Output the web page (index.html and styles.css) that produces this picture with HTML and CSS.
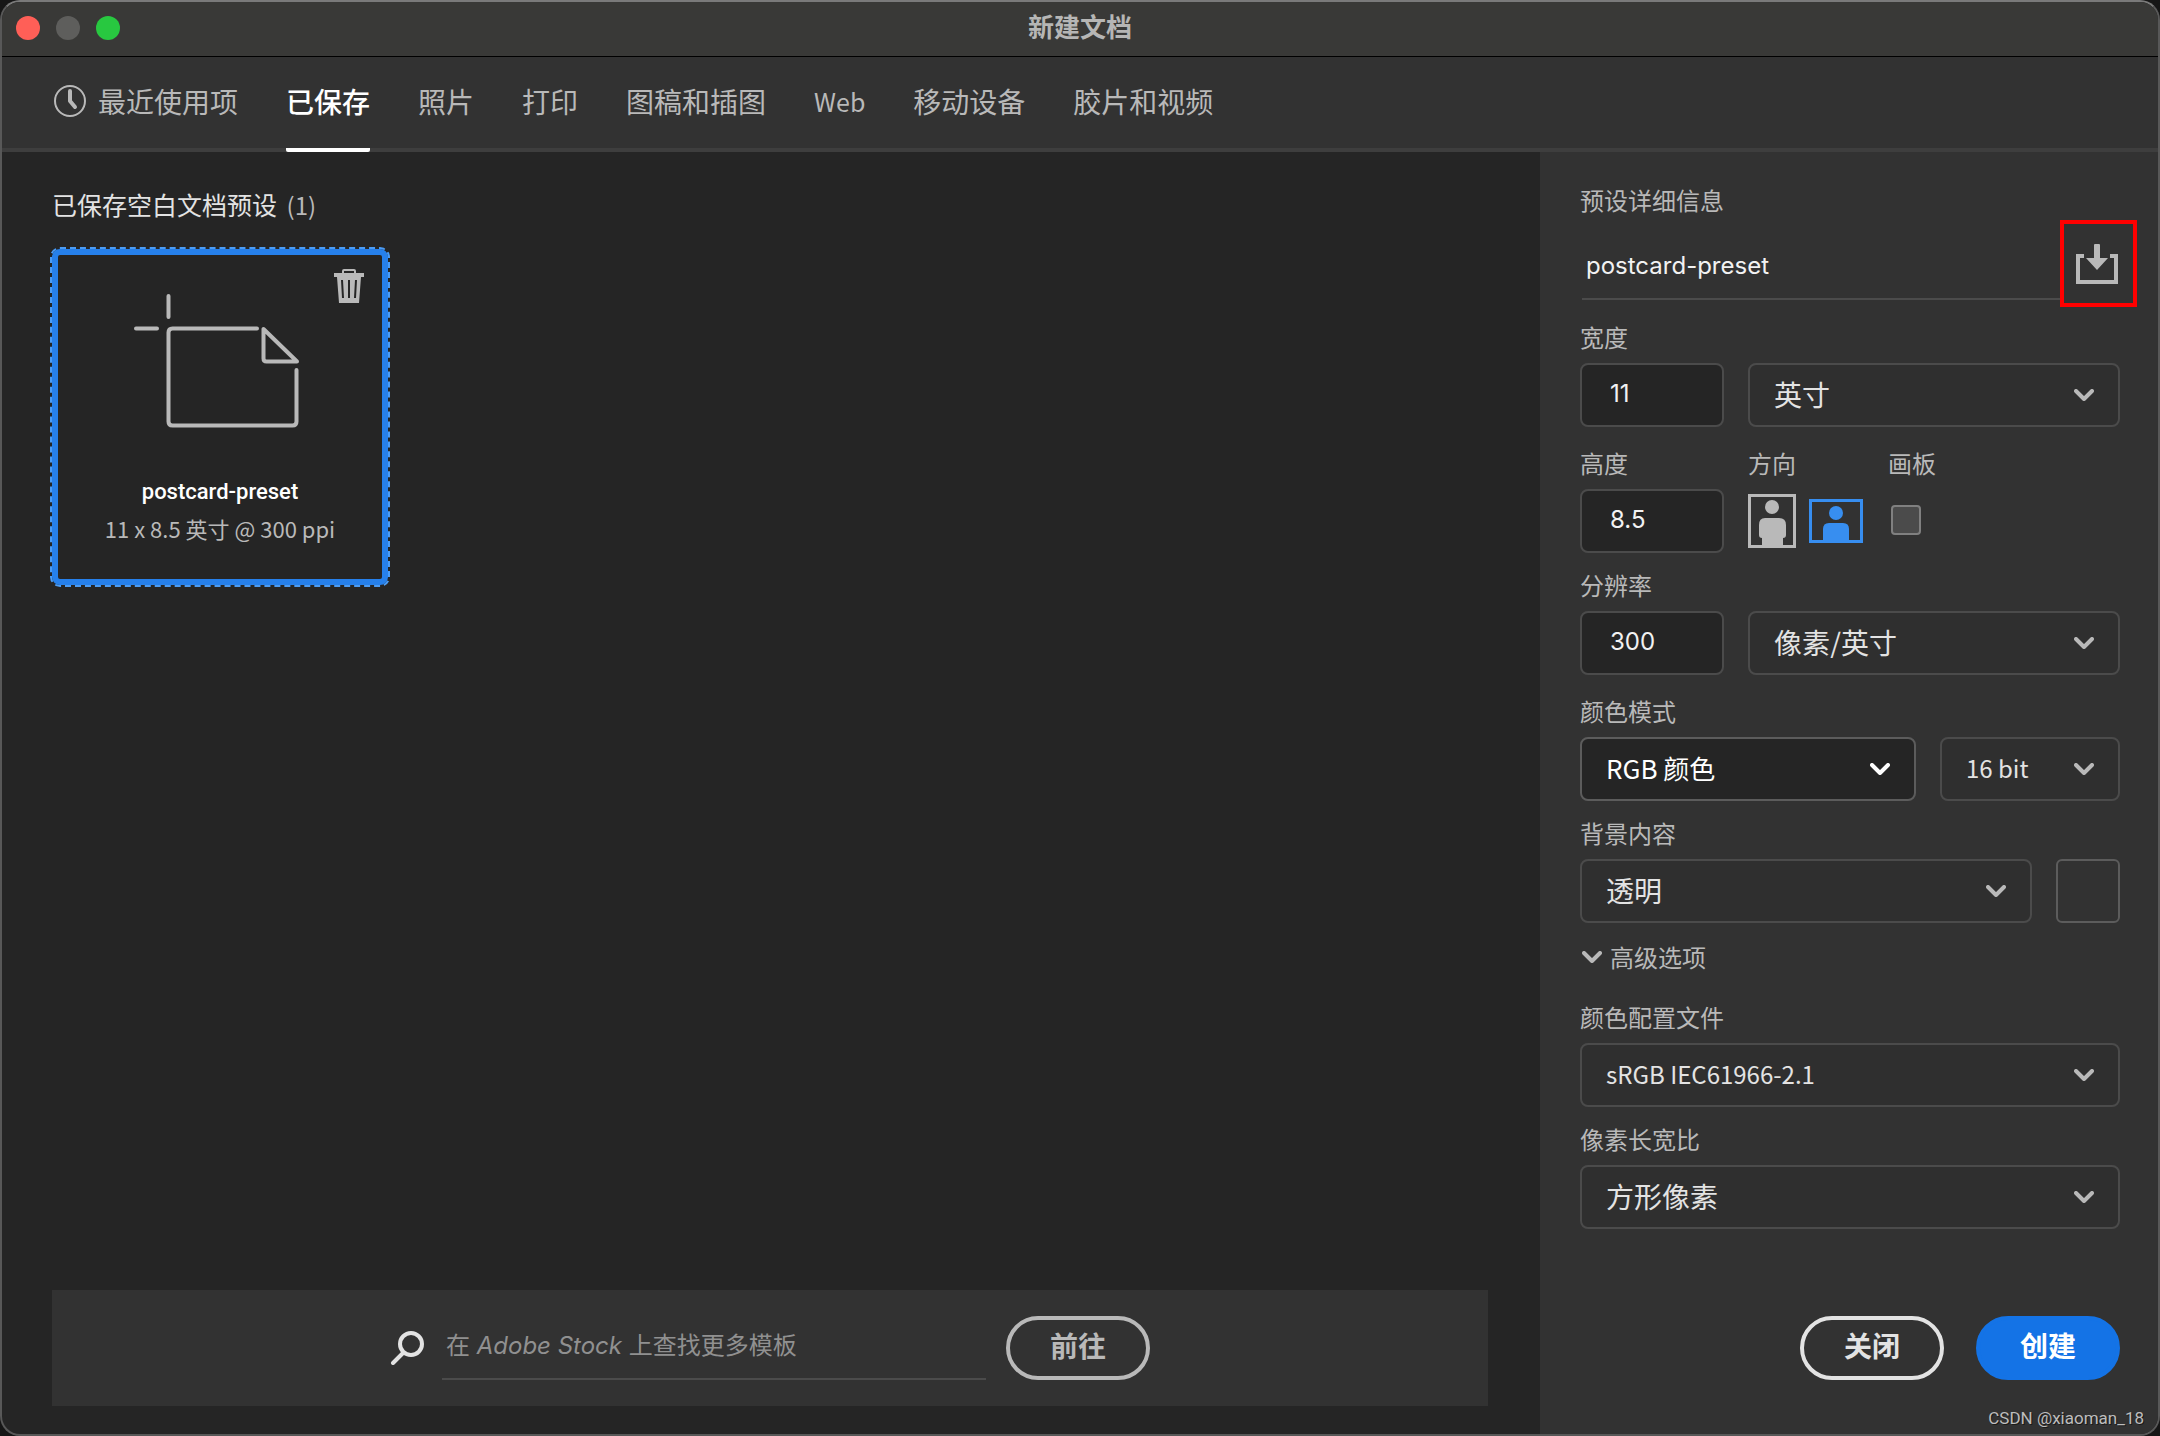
FILE: index.html
```html
<!DOCTYPE html>
<html lang="zh-CN">
<head>
<meta charset="utf-8">
<meta name="viewport" content="width=device-width, initial-scale=1">
<title>新建文档</title>
<link rel="stylesheet" href="styles.css">
</head>
<body>
<svg class="sprite" aria-hidden="true">
  <symbol id="chevron" viewBox="0 0 20 12"><path d="M2 2l8 8 8-8" fill="none" stroke="currentColor" stroke-width="4" stroke-linecap="round" stroke-linejoin="round"/></symbol>
</svg>
<div class="window">
  <header class="titlebar">
    <div class="lights">
      <button class="light light-close" type="button" aria-label="关闭窗口"></button>
      <button class="light light-min" type="button" aria-label="最小化" disabled></button>
      <button class="light light-zoom" type="button" aria-label="缩放"></button>
    </div>
    <h1 class="title">新建文档</h1>
  </header>

  <nav class="tabs">
    <a class="tab tab-recent" href="#recent">
      <svg class="clock" viewBox="0 0 32 32" aria-hidden="true"><circle cx="16" cy="16" r="15" fill="none" stroke="currentColor" stroke-width="2"/><path d="M16 6v10l5 6" fill="none" stroke="currentColor" stroke-width="4" stroke-linecap="round" stroke-linejoin="round"/></svg>
      <span>最近使用项</span>
    </a>
    <a class="tab tab-active" href="#saved" aria-current="page">已保存</a>
    <a class="tab" href="#photo">照片</a>
    <a class="tab" href="#print">打印</a>
    <a class="tab" href="#art">图稿和插图</a>
    <a class="tab tab-latin" href="#web">Web</a>
    <a class="tab" href="#mobile">移动设备</a>
    <a class="tab" href="#film">胶片和视频</a>
  </nav>

  <div class="content">
    <main class="presets">
      <h2 class="presets-title">已保存空白文档预设 <span class="count">(1)</span></h2>
      <article class="card" tabindex="0">
        <button class="trash" type="button" aria-label="删除预设">
          <svg viewBox="0 0 30 34" aria-hidden="true"><path d="M9 4V2q0-1 1-1h10q1 0 1 1v2" fill="none" stroke="currentColor" stroke-width="2"/><path fill="currentColor" fill-rule="evenodd" d="M0 4h30v4h-3l-2 26H5L3 8H0zM7 11l1 18h2L9 11zM14 11v18h2V11zM21 11l-1 18h2l1-18z"/></svg>
        </button>
        <svg class="doc" viewBox="0 0 176 138" aria-hidden="true"><path d="M36.500 4v21M4 36.500h21M125 36.500H40.500q-4 0-4 4v89q0 4 4 4h120q4 0 4-4V78M131.500 37v29.500q0 3 3 3H165z" fill="none" stroke="currentColor" stroke-width="4" stroke-linecap="round" stroke-linejoin="round"/></svg>
        <h3 class="card-name">postcard-preset</h3>
        <p class="card-info">11 x 8.5 英寸 @ 300 ppi</p>
      </article>

      <form class="stock">
        <svg class="search-icon" viewBox="0 0 34 34" aria-hidden="true"><circle cx="21" cy="13" r="11" fill="none" stroke="currentColor" stroke-width="4"/><path d="M13 22L3 32" stroke="currentColor" stroke-width="4" stroke-linecap="round"/></svg>
        <input class="stock-input" type="search" aria-label="查找模板" placeholder="在 Adobe Stock 上查找更多模板">
        <button class="pill pill-quiet" type="submit">前往</button>
      </form>
    </main>

    <form class="details">
      <label class="label" for="name">预设详细信息</label>
      <div class="name-row">
        <input class="name-input" id="name" type="text" value="postcard-preset">
        <button class="save" type="button" aria-label="保存预设">
          <svg viewBox="0 0 42 40" aria-hidden="true"><path d="M8 12H2v26h38V12h-6" fill="none" stroke="currentColor" stroke-width="4"/><path d="M18 1q0-1 1-1h4q1 0 1 1v13h8L21 26 10 14h8z" fill="currentColor"/></svg>
        </button>
      </div>

      <div class="field">
        <label class="label" for="width">宽度</label>
        <div class="row">
          <input class="number" id="width" type="text" value="11">
          <div class="select grow"><select aria-label="单位"><option>英寸</option></select><svg class="chevron"><use href="#chevron"/></svg></div>
        </div>
      </div>

      <div class="field-set">
        <div class="field">
          <label class="label" for="height">高度</label>
          <input class="number" id="height" type="text" value="8.5">
        </div>
        <div class="field field-orient">
          <span class="label" id="orient">方向</span>
          <div class="orient" role="radiogroup" aria-labelledby="orient">
            <div class="choice">
              <input type="radio" name="orient" aria-label="纵向">
              <svg class="portrait" viewBox="0 0 48 54" aria-hidden="true"><rect x="1.500" y="1.500" width="45" height="51" fill="none" stroke="currentColor" stroke-width="3"/><circle cx="24" cy="13" r="7" fill="currentColor"/><path d="M17 24h14q7 0 7 7v10q0 3-3 3v8H14v-8q-3 0-3-3V31q0-7 6-7z" fill="currentColor"/></svg>
            </div>
            <div class="choice">
              <input type="radio" name="orient" aria-label="横向" checked>
              <svg class="landscape" viewBox="0 0 54 44" aria-hidden="true"><rect x="1.500" y="1.500" width="51" height="41" fill="none" stroke="currentColor" stroke-width="3"/><circle cx="27" cy="14" r="7" fill="currentColor"/><path d="M20 24h14q6 0 6 6v13H14V30q0-6 6-6z" fill="currentColor"/></svg>
            </div>
          </div>
        </div>
        <div class="field">
          <label class="label" for="artboard">画板</label>
          <div class="check-row"><input class="check" id="artboard" type="checkbox"></div>
        </div>
      </div>

      <div class="field tight">
        <label class="label" for="resolution">分辨率</label>
        <div class="row">
          <input class="number" id="resolution" type="text" value="300">
          <div class="select grow"><select aria-label="分辨率单位"><option>像素/英寸</option></select><svg class="chevron"><use href="#chevron"/></svg></div>
        </div>
      </div>

      <div class="field">
        <label class="label" for="mode">颜色模式</label>
        <div class="row">
          <div class="select grow focused"><select id="mode"><option>RGB 颜色</option></select><svg class="chevron"><use href="#chevron"/></svg></div>
          <div class="select latin depth"><select aria-label="位深度"><option>16 bit</option></select><svg class="chevron"><use href="#chevron"/></svg></div>
        </div>
      </div>

      <div class="field tight">
        <label class="label" for="background">背景内容</label>
        <div class="row">
          <div class="select grow"><select id="background"><option>透明</option></select><svg class="chevron"><use href="#chevron"/></svg></div>
          <button class="swatch" type="button" aria-label="背景颜色"></button>
        </div>
      </div>

      <button class="advanced" type="button" aria-expanded="true"><svg><use href="#chevron"/></svg>高级选项</button>

      <div class="field profile">
        <label class="label" for="profile">颜色配置文件</label>
        <div class="select latin"><select id="profile"><option>sRGB IEC61966-2.1</option></select><svg class="chevron"><use href="#chevron"/></svg></div>
      </div>

      <div class="field tight">
        <label class="label" for="aspect">像素长宽比</label>
        <div class="select"><select id="aspect"><option>方形像素</option></select><svg class="chevron"><use href="#chevron"/></svg></div>
      </div>

      <div class="actions">
        <button class="pill" type="button">关闭</button>
        <button class="pill pill-primary" type="submit">创建</button>
      </div>
    </form>
  </div>
  <span class="watermark">CSDN @xiaoman_18</span>
</div>
</body>
</html>
```
FILE: styles.css
```css
* { box-sizing: border-box; }

body {
  margin: 0;
  background: #161616;
  color: #e3e3e3;
  font-family: "Noto Sans CJK SC", sans-serif;
  font-size: 24px;
  line-height: 32px;
}

button, input, select {
  margin: 0;
  padding: 0;
  border: 0;
  background: none;
  color: inherit;
  font: inherit;
  outline: 0;
}

h1, h2, h3, p { margin: 0; font-weight: 400; }
svg { display: block; }
.sprite { display: none; }

.window {
  position: relative;
  display: flex;
  flex-direction: column;
  min-height: 100vh;
  overflow: hidden;
  border: 2px solid #585858;
  border-top-color: #7a7a7a;
  border-radius: 20px;
  background: #252525;
}

/* Title bar */
.titlebar {
  display: grid;
  grid-template-columns: 1fr auto 1fr;
  align-items: center;
  height: 55px;
  padding: 0 14px 2px;
  border-bottom: 1px solid #000;
  background: #393937;
}
.lights { display: flex; gap: 16px; }
.light { width: 24px; height: 24px; border-radius: 50%; }
.light-close { background: #ff5f57; }
.light-min { background: #5e5e5c; }
.light-zoom { background: #28c840; }
.title { padding-bottom: 4px; color: #b6b6b5; font-size: 26px; font-weight: 700; }

/* Category tabs */
.tabs {
  display: flex;
  gap: 48px;
  height: 95px;
  padding: 0 52px;
  background: #323232;
  box-shadow: inset 0 -4px #3e3e3e;
}
.tab {
  display: flex;
  align-items: center;
  gap: 12px;
  padding-bottom: 4px;
  border-bottom: 4px solid transparent;
  color: #b9b9b9;
  font-size: 28px;
  text-decoration: none;
}
.tab-active { border-color: #fff; border-radius: 2px; color: #fff; font-weight: 500; }
.tab-latin { font-size: 25px; }
.clock { width: 32px; height: 32px; }

.content { display: flex; flex: 1; }

/* Saved presets */
.presets {
  display: flex;
  flex: 1;
  flex-direction: column;
  align-items: flex-start;
  padding: 36px 52px 28px 50px;
}
.presets-title { font-size: 25px; }
.count { margin-left: 4px; color: #b9b9b9; font-size: 24px; }
.card {
  position: relative;
  display: flex;
  flex-direction: column;
  align-items: center;
  width: 336px;
  height: 336px;
  margin-top: 28px;
  padding-top: 37px;
  border: 6px solid #2680eb;
  border-radius: 8px;
  outline: 2px dashed #4b9cf5;
}
.doc { width: 176px; height: 138px; color: #b9b9b9; }
.trash {
  position: absolute;
  top: 14px;
  right: 18px;
  width: 30px;
  height: 34px;
  color: #b9b9b9;
}
.card-name {
  margin-top: 44px;
  color: #fff;
  font-family: Roboto, "Noto Sans CJK SC", sans-serif;
  font-size: 22px;
  font-weight: 500;
  line-height: 36px;
}
.card-info { color: #b9b9b9; font-size: 22px; line-height: 36px; }

.stock {
  display: flex;
  align-items: center;
  justify-content: center;
  width: 100%;
  margin-top: auto;
  padding: 26px;
  background: #323232;
}
.search-icon { width: 34px; height: 34px; margin-right: 18px; color: #e3e3e3; }
.stock-input {
  width: 544px;
  height: 64px;
  margin-right: 20px;
  padding: 0 4px 4px;
  border-bottom: 2px solid #4b4b4b;
  font-family: Inter, "Noto Sans CJK SC", sans-serif;
}
.stock-input::placeholder {
  color: #909090;
  font-style: italic;
  font-synthesis: none;
  opacity: 1;
}

.pill {
  width: 144px;
  height: 64px;
  padding-bottom: 6px;
  border: 4px solid #e3e3e3;
  border-radius: 32px;
  color: #e3e3e3;
  font-size: 28px;
  font-weight: 700;
}
.pill-quiet { border-color: #b9b9b9; color: #b9b9b9; }
.pill-primary { border-color: #1473e6; background: #1473e6; color: #fff; }

/* Preset details */
.details {
  display: flex;
  flex: 0 0 618px;
  flex-direction: column;
  padding: 32px 38px 54px 40px;
  background: #323232;
}
.label { display: block; color: #b9b9b9; }
.name-row { display: flex; align-items: flex-start; margin: 4px -17px -6px 2px; }
.name-input {
  flex: 1;
  min-width: 0;
  height: 80px;
  padding: 12px 4px 0;
  border-bottom: 2px solid #4b4b4b;
  color: #f2f2f2;
  font-family: Inter, "Noto Sans CJK SC", sans-serif;
}
.save {
  display: grid;
  place-items: center;
  width: 77px;
  height: 87px;
  padding-right: 3px;
  border: 4px solid #f00;
  color: #b9b9b9;
}
.save svg { width: 42px; height: 40px; }

.field, .field-set { margin-top: 20px; }
.field-set { display: flex; }
.field-set .field { margin-top: 0; }
.tight { margin-top: 16px; }
.field .label { margin-bottom: 10px; }
.row { display: flex; gap: 24px; }
.grow { flex: 1; }

.number {
  width: 144px;
  height: 64px;
  padding: 0 28px 4px;
  border: 2px solid #4b4b4b;
  border-radius: 8px;
  background: #252525;
  color: #f2f2f2;
  font-family: Inter, "Noto Sans CJK SC", sans-serif;
}

.select { display: grid; align-items: center; color: #b9b9b9; }
.select select {
  grid-area: 1 / 1;
  width: 100%;
  height: 64px;
  padding: 0 60px 3px 24px;
  border: 2px solid #4b4b4b;
  border-radius: 8px;
  background: #2f2f2f;
  color: #e3e3e3;
  font-size: 28px;
  appearance: none;
}
.chevron {
  grid-area: 1 / 1;
  justify-self: end;
  width: 20px;
  height: 12px;
  margin-right: 26px;
  pointer-events: none;
}
.focused { color: #fff; }
.focused select { border-color: #5c5c5c; background: #252525; color: #fff; font-size: 26px; }
.focused .chevron { margin-right: 26px; }
.latin select { font-size: 24px; }
.depth { width: 180px; }
.swatch { width: 64px; height: 64px; border: 2px solid #5c5c5c; border-radius: 6px; }

.field-orient { width: 140px; margin-left: 24px; }
.orient { display: flex; align-items: center; gap: 13px; height: 64px; }
.choice { display: grid; color: #b9b9b9; }
.choice input { grid-area: 1 / 1; appearance: none; }
.choice svg { grid-area: 1 / 1; pointer-events: none; }
.choice:has(:checked) { color: #378ef0; }
.portrait { width: 48px; height: 54px; }
.landscape { width: 54px; height: 44px; }
.check-row { display: flex; align-items: center; height: 62px; padding: 0 3px; }
.check {
  width: 30px;
  height: 30px;
  border: 2px solid #808080;
  border-radius: 4px;
  background: #4b4b4b;
  appearance: none;
}

.advanced {
  display: flex;
  align-items: center;
  align-self: flex-start;
  gap: 8px;
  margin-top: 18px;
  padding-left: 2px;
  color: #b9b9b9;
}
.advanced svg { width: 20px; height: 12px; }
.profile { margin-top: 28px; }

.actions {
  display: flex;
  justify-content: flex-end;
  gap: 32px;
  margin-top: auto;
}

.watermark {
  position: absolute;
  right: 14px;
  bottom: 4px;
  color: #bdbdbd;
  font-family: Roboto, sans-serif;
  font-size: 17px;
  line-height: 24px;
  text-shadow: 1px 1px #1a1a1a;
}
```
